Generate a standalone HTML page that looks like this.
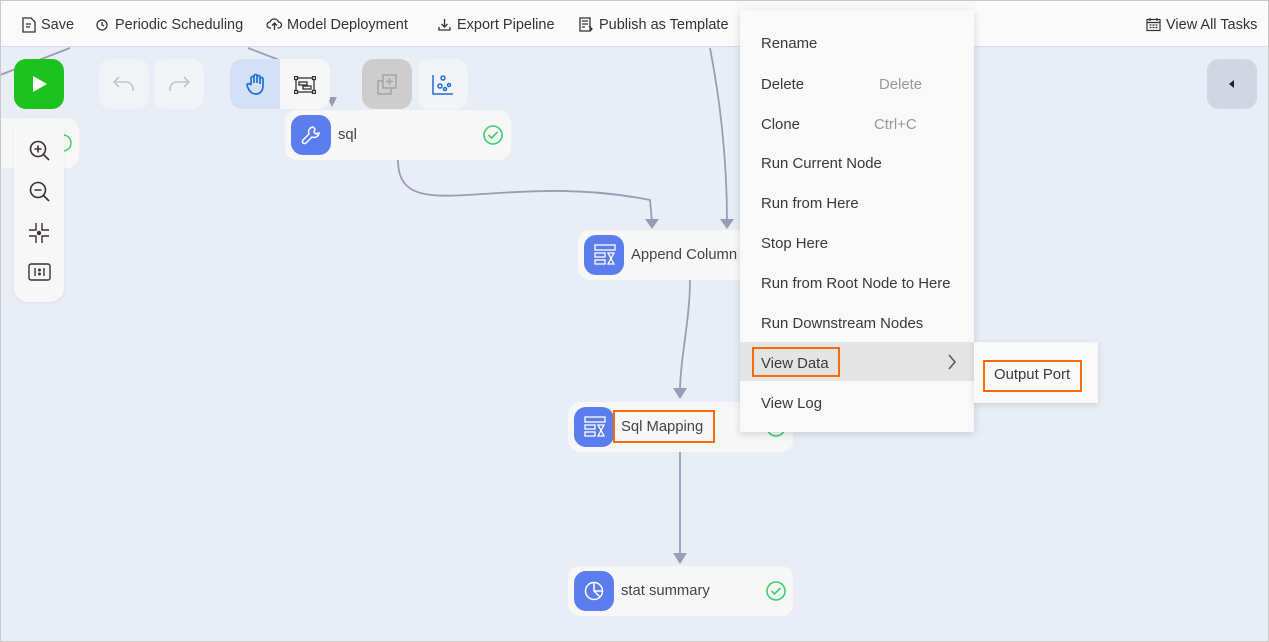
<!DOCTYPE html>
<html><head><meta charset="utf-8"><style>
*{box-sizing:border-box;margin:0;padding:0}
body{width:1269px;height:642px;overflow:hidden;font-family:"Liberation Sans",sans-serif;background:#e9edf5;position:relative;color:#333}
.frame{position:absolute;left:0;top:0;width:1269px;height:642px;border:1px solid #c8c8c8;pointer-events:none;z-index:50}
.top{position:absolute;left:0;top:0;width:1269px;height:47px;background:#fafafa;border-bottom:1px solid #d6dbe6;font-size:14.5px;color:#333}
.top span{position:absolute;top:17px;white-space:nowrap}
.abs{position:absolute}
.btn{position:absolute;width:50px;height:50px;border-radius:12px;background:#f3f4f8}
.node{position:absolute;height:50px;background:#f7f7f7;border-radius:12px;font-size:14.8px;color:#444}
.node .ic{position:absolute;left:6px;top:5px;width:40px;height:40px;border-radius:12px;background:#5b7ded}
.node .t{position:absolute;left:53px;top:17px}
.menu{position:absolute;left:740px;top:10px;width:234px;height:422px;background:#f9f9f9;box-shadow:0 2px 8px rgba(0,0,0,.15);font-size:14.9px;color:#3a3a3a}
.menu div{position:absolute;left:21px}
.sc{color:#999}
.ob{position:absolute;border:2px solid #ff6a00}
</style></head><body>
<div class="top">
<svg class="abs" style="left:22px;top:17px" width="14" height="16" viewBox="0 0 14 16" fill="none" stroke="#333" stroke-width="1.3"><path d="M1 1h8l4 4v10H1z M4 7h5 M4 10h4"/></svg>
<span style="left:41px">Save</span>
<svg class="abs" style="left:96px;top:19px" width="12" height="12" viewBox="0 0 12 12" fill="none" stroke="#333" stroke-width="1.3"><circle cx="6" cy="6" r="5"/><path d="M6 3v3l2 1"/></svg>
<span style="left:115px">Periodic Scheduling</span>
<svg class="abs" style="left:266px;top:17px" width="17" height="14" viewBox="0 0 17 14" fill="none" stroke="#333" stroke-width="1.3"><path d="M5 11H4a3 3 0 010-6 4.5 4.5 0 018.5 0 3 3 0 010 6h-1 M8.5 13V6 M6 8.5l2.5-2.5 2.5 2.5"/></svg>
<span style="left:287px">Model Deployment</span>
<svg class="abs" style="left:438px;top:18px" width="13" height="13" viewBox="0 0 13 13" fill="none" stroke="#333" stroke-width="1.3"><path d="M6.5 1v8 M3.5 6l3 3 3-3 M1 9v3h11V9"/></svg>
<span style="left:457px">Export Pipeline</span>
<svg class="abs" style="left:579px;top:17px" width="15" height="15" viewBox="0 0 15 15" fill="none" stroke="#333" stroke-width="1.3"><path d="M1 1h10v13H1z M3 4h6 M3 7h6 M3 10h3 M10 9l3 3-2 2"/></svg>
<span style="left:599px">Publish as Template</span>
<svg class="abs" style="left:1146px;top:17px" width="15" height="15" viewBox="0 0 15 15" fill="none" stroke="#333" stroke-width="1.2"><rect x="1" y="2.5" width="13" height="11"/><path d="M1 5.5h13 M4 1v3 M11 1v3 M3.5 8h2 M6.5 8h2 M9.5 8h2 M3.5 10.5h2 M6.5 10.5h2 M9.5 10.5h2"/></svg>
<span style="left:1166px">View All Tasks</span>
</div>

<svg class="abs" style="left:0;top:0" width="1269" height="642" fill="none" stroke="#9a9cb6" stroke-width="1.8">
<path d="M0 75 L70 48"/><path d="M248 48 L300 68"/>
<path d="M398 160 C398 230 500 170 650 200 L652 222"/>
<path d="M710 48 C722 110 727 170 727 222"/>
<path d="M690 280 C690 320 680 360 680 390"/>
<path d="M680 452 L680 556"/>
<g fill="#9a9cb6" stroke="none">
<path d="M645 219h14l-7 10z"/><path d="M720 219h14l-7 10z"/><path d="M673 388h14l-7 11z"/><path d="M673 553h14l-7 11z"/><path d="M327 97l10 0-5 10z"/>
</g>
</svg>

<div class="btn" style="left:14px;top:59px;background:#1ec21e"><svg class="abs" style="left:17px;top:16px" width="18" height="18"><path d="M2 1L16 9 2 17z" fill="#fff"/></svg></div>
<div class="node" style="left:-30px;top:118px;width:109px;height:50px"><svg class="abs" style="left:84px;top:16px" width="18" height="18" fill="none" stroke="#3ccf6e" stroke-width="1.5"><circle cx="9" cy="9" r="8"/></svg></div>
<div class="abs" style="left:14px;top:118px;width:50px;height:184px;background:#f7f7f7;border-radius:14px;box-shadow:0 1px 4px rgba(0,0,0,.06)">
<svg class="abs" style="left:15px;top:22px" width="22" height="22" fill="none" stroke="#3a3030" stroke-width="1.6"><circle cx="9" cy="9" r="7.5"/><path d="M14.5 14.5L20 20 M5.5 9h7 M9 5.5v7"/></svg>
<svg class="abs" style="left:15px;top:63px" width="22" height="22" fill="none" stroke="#3a3030" stroke-width="1.6"><circle cx="9" cy="9" r="7.5"/><path d="M14.5 14.5L20 20 M5.5 9h7"/></svg>
<svg class="abs" style="left:14px;top:104px" width="22" height="22" fill="none" stroke="#3a3030" stroke-width="1.4"><path d="M8 1v7H1 M14 1v7h7 M8 21v-7H1 M14 21v-7h7"/><circle cx="11" cy="11" r="1.5" fill="#3a3030"/></svg>
<svg class="abs" style="left:14px;top:145px" width="23" height="19" fill="none" stroke="#3a3030" stroke-width="1.4"><rect x="1" y="1" width="21" height="16" rx="2"/><path d="M7 5v8 M16 5v8"/><circle cx="11.5" cy="7" r=".8" fill="#3a3030"/><circle cx="11.5" cy="11" r=".8" fill="#3a3030"/></svg>
</div>

<div class="btn" style="left:99px;top:59px"><svg class="abs" style="left:14px;top:17px" width="22" height="16" fill="none" stroke="#c4c4c8" stroke-width="1.6"><path d="M6 1L1 6l5 5 M1 6h12a7 7 0 017 7v2"/></svg></div>
<div class="btn" style="left:154px;top:59px"><svg class="abs" style="left:14px;top:17px" width="22" height="16" fill="none" stroke="#c4c4c8" stroke-width="1.6"><path d="M16 1l5 5-5 5 M21 6H9a7 7 0 00-7 7v2"/></svg></div>
<div class="abs" style="left:230px;top:59px;width:100px;height:50px;border-radius:12px;background:#f7f7f7;overflow:hidden">
<div class="abs" style="left:0;top:0;width:50px;height:50px;background:#d3e0f7"></div>
<svg class="abs" style="left:16px;top:14px" width="20" height="22" fill="none" stroke="#1f6fd6" stroke-width="1.7"><path d="M5 12V5a1.5 1.5 0 013 0v5 M8 10V3a1.5 1.5 0 013 0v7 M11 10V4a1.5 1.5 0 013 0v7 M14 10V6a1.5 1.5 0 013 0v7c0 5-3 8-7 8s-6-2-8-6l-1-3a1.5 1.5 0 012.5-1L5 12"/></svg>
<svg class="abs" style="left:64px;top:17px" width="22" height="18" fill="none" stroke="#333" stroke-width="1.3"><rect x="2" y="2" width="18" height="14"/><rect x="5" y="6" width="8" height="3"/><rect x="9" y="10" width="8" height="3"/><rect x="0.5" y="0.5" width="3" height="3" fill="#fff"/><rect x="18.5" y="0.5" width="3" height="3" fill="#fff"/><rect x="0.5" y="14.5" width="3" height="3" fill="#fff"/><rect x="18.5" y="14.5" width="3" height="3" fill="#fff"/></svg>
</div>
<div class="btn" style="left:362px;top:59px;background:#cdcdcd"><svg class="abs" style="left:14px;top:15px" width="22" height="22" fill="none" stroke="#a4a4a4" stroke-width="1.5"><rect x="7" y="1" width="13" height="13"/><path d="M7 7H2v13h13v-5 M13.5 4v7 M10 7.5h7"/></svg></div>
<div class="btn" style="left:418px;top:59px"><svg class="abs" style="left:14px;top:15px" width="22" height="22" fill="none" stroke="#1f6fd6" stroke-width="1.5"><path d="M1 1v19h20"/><circle cx="11" cy="4" r="2"/><circle cx="8" cy="12" r="2"/><circle cx="17" cy="11" r="1.5"/><circle cx="13" cy="15" r="1.5"/></svg></div>
<div class="btn" style="left:1207px;top:59px;background:#d2d6e2"><svg class="abs" style="left:21px;top:20px" width="8" height="10"><path d="M6 1v8L1 5z" fill="#222"/></svg></div>

<div class="node" style="left:285px;top:110px;width:226px"><div class="ic"><svg class="abs" style="left:10px;top:10px" width="20" height="20" fill="none" stroke="#fff" stroke-width="1.5"><path d="M12 2a5 5 0 00-4 7L2 15a2 2 0 003 3l6-6a5 5 0 007-4l-3 1-2-2 1-3z"/></svg></div><span class="t">sql</span><svg class="abs" style="left:198px;top:15px" width="20" height="20" fill="none" stroke="#3ccf6e" stroke-width="1.6"><circle cx="10" cy="10" r="9"/><path d="M5.5 10l3 3 6-6"/></svg></div>

<div class="node" style="left:578px;top:230px;width:170px"><div class="ic"><svg class="abs" style="left:10px;top:9px" width="22" height="22" fill="none" stroke="#fff" stroke-width="1.3"><rect x="1" y="1" width="20" height="5"/><rect x="1" y="9" width="10" height="4"/><rect x="1" y="16" width="10" height="4"/><path d="M14 9h6l-6 11h6z"/></svg></div><span class="t">Append Column</span></div>

<div class="node" style="left:568px;top:402px;width:225px"><div class="ic"><svg class="abs" style="left:10px;top:9px" width="22" height="22" fill="none" stroke="#fff" stroke-width="1.3"><rect x="1" y="1" width="20" height="5"/><rect x="1" y="9" width="10" height="4"/><rect x="1" y="16" width="10" height="4"/><path d="M14 9h6l-6 11h6z"/></svg></div><span class="t" style="left:53px;top:17px">Sql Mapping</span><svg class="abs" style="left:198px;top:15px" width="20" height="20" fill="none" stroke="#3ccf6e" stroke-width="1.6"><circle cx="10" cy="10" r="9"/></svg></div>
<div class="ob" style="left:613px;top:410px;width:102px;height:33px"></div>

<div class="node" style="left:568px;top:566px;width:225px"><div class="ic"><svg class="abs" style="left:10px;top:10px" width="20" height="20" fill="none" stroke="#fff" stroke-width="1.5"><circle cx="10" cy="10" r="8.5"/><path d="M10 1.5V10l6 6 M10 10h8.5"/></svg></div><span class="t">stat summary</span><svg class="abs" style="left:198px;top:15px" width="20" height="20" fill="none" stroke="#3ccf6e" stroke-width="1.6"><circle cx="10" cy="10" r="9"/><path d="M5.5 10l3 3 6-6"/></svg></div>

<div class="menu">
<div style="top:26px">Rename</div>
<div style="top:67px">Delete</div><div class="sc" style="top:67px;left:139px">Delete</div>
<div style="top:107px">Clone</div><div class="sc" style="top:107px;left:134px">Ctrl+C</div>
<div style="top:146px">Run Current Node</div>
<div style="top:186px">Run from Here</div>
<div style="top:226px">Stop Here</div>
<div style="top:266px">Run from Root Node to Here</div>
<div style="top:306px">Run Downstream Nodes</div>
<div style="left:0;top:332px;width:234px;height:39px;background:#e4e4e4"></div>
<div style="top:346px">View Data</div>
<svg class="abs" style="left:207px;top:344px" width="10" height="16" fill="none" stroke="#555" stroke-width="1.5"><path d="M2 1l6 7-6 7"/></svg>
<div style="top:386px">View Log</div>
</div>
<div class="ob" style="left:752px;top:347px;width:88px;height:30px"></div>
<div class="abs" style="left:974px;top:342px;width:124px;height:61px;background:#f9f9f9;box-shadow:0 2px 6px rgba(0,0,0,.12)"><div class="abs" style="left:20px;top:25px;font-size:14.9px;color:#3a3a3a">Output Port</div></div>
<div class="ob" style="left:983px;top:360px;width:99px;height:32px"></div>
<div class="frame"></div>
</body></html>
